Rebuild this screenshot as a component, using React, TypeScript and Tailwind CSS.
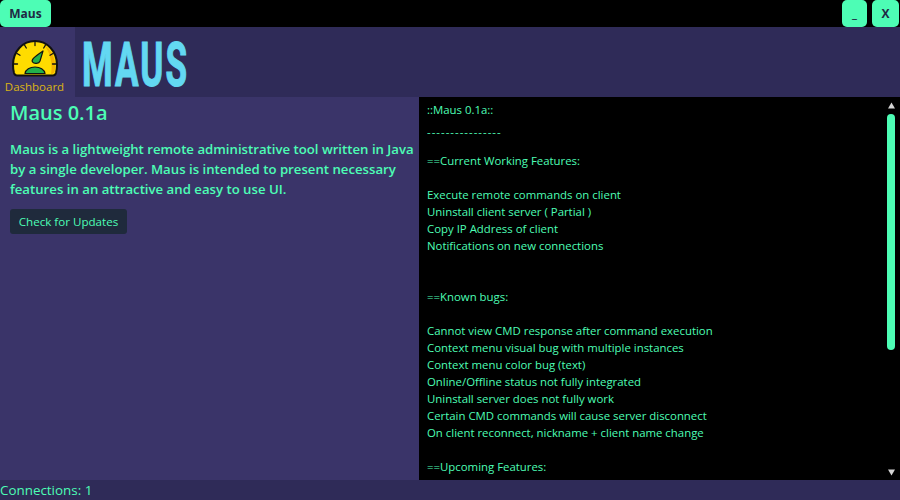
import React from 'react';

const uiFont = "font-['Open_Sans','Noto_Sans',sans-serif]";

const notes: string[] = [
  'Execute remote commands on client',
  'Uninstall client server ( Partial )',
  'Copy IP Address of client',
  'Notifications on new connections',
];

const bugs: string[] = [
  'Cannot view CMD response after command execution',
  'Context menu visual bug with multiple instances',
  'Context menu color bug (text)',
  'Online/Offline status not fully integrated',
  'Uninstall server does not fully work',
  'Certain CMD commands will cause server disconnect',
  'On client reconnect, nickname + client name change',
];

const Gauge = () => (
  <svg width="46" height="37" viewBox="0 0 46 37" className="ml-[1px] block">
    <path d="M5 35.500 C3 35.500 2.500 34.500 2 33 C1.300 30.500 1 27.500 1 25 C1 11 11 1 23 1 C35 1 45 11 45 25 C45 27.500 44.700 30.500 44 33 C43.500 34.500 43 35.500 41 35.500 Z" fill="#ffdc00" stroke="#111" strokeWidth="2" strokeLinejoin="round" />
    <path d="M39 34 C42 34 42.500 32 43 29 C44 18 39 9 32 5 C38 12 41 24 39 34 Z" fill="#f5b400" />
    <g stroke="#111" strokeWidth="1.300" strokeLinecap="round">
      <path d="M23 2v3.500" />
      <path d="M12.500 5l1.800 3" />
      <path d="M33.500 5l-1.800 3" />
      <path d="M5 13.500l3 1.700" />
      <path d="M41 13.500l-3 1.700" />
      <path d="M2 24h3.500" />
      <path d="M44 24h-3.500" />
    </g>
    <path d="M31 11 L28 21 C27 24 22 24 20.500 22 C19 20 21.500 17.500 31 11 Z" fill="#22b04c" stroke="#111" strokeWidth="1.200" strokeLinejoin="round" />
    <path d="M13 33.500 C13.500 29.500 18 27 23 27 C28 27 32.500 29.500 33 33.500 Z" fill="#22b04c" stroke="#111" strokeWidth="1.200" strokeLinejoin="round" />
  </svg>
);

const ArrowUp = () => (
  <svg width="7" height="7" viewBox="0 0 7 7"><path d="M3.500 0.500 L7 6.500 H0 Z" fill="#d4d4d4" /></svg>
);

const ArrowDown = () => (
  <svg width="7" height="7" viewBox="0 0 7 7"><path d="M0 0.500 H7 L3.500 6.500 Z" fill="#d4d4d4" /></svg>
);

export default function App() {
  return (
    <div className={`flex h-[500px] w-[900px] flex-col overflow-hidden bg-black ${uiFont}`}>
      {/* Title bar */}
      <div className="flex h-[27px] shrink-0 items-start justify-between bg-black">
        <button className="h-[27px] w-[51px] rounded-[5px] bg-[#4dfdb5] text-[12px] font-bold text-[#1f2a44]">
          Maus
        </button>
        <div className="mr-[1px] flex gap-[5px]">
          <button className="h-[27px] w-[25px] rounded-[5px] bg-[#4dfdb5] text-[12px] font-bold text-[#1f2a44]">_</button>
          <button className="h-[27px] w-[27px] rounded-[5px] bg-[#4dfdb5] text-[12px] font-bold text-[#1f2a44]">X</button>
        </div>
      </div>

      {/* Header */}
      <div className="flex h-[70px] shrink-0 bg-[#2f2b58]">
        <div className="flex w-[75px] shrink-0 flex-col items-center bg-[#3a3469] pt-[13px] pr-[6px]">
          <Gauge />
          <span className="mt-[2px] text-[11.5px] leading-[15px] font-medium whitespace-nowrap text-[#dcb414]">Dashboard</span>
        </div>
        <div className="flex items-center pt-[6px] pl-[7px]">
          <span className="inline-block origin-left scale-x-[0.7] scale-y-[1.24] font-['Roboto',sans-serif] text-[50px] leading-none font-bold tracking-[3px] text-[#63d8f2] [-webkit-text-stroke:1px_#63d8f2]">
            MAUS
          </span>
        </div>
      </div>

      {/* Main */}
      <div className="flex min-h-0 flex-1">
        <div className="w-[419px] shrink-0 bg-[#3a3469] pl-[10px] text-[#4dfdb5]">
          <h1 className="mt-[1px] text-[20px] leading-[30px] font-semibold">Maus 0.1a</h1>
          <p className="mt-[11px] text-[13.2px] leading-[20px] font-semibold">
            Maus is a lightweight remote administrative tool written in Java by a single developer. Maus is intended to present necessary features in an attractive and easy to use UI.
          </p>
          <button className="mt-[10px] flex h-[25px] w-[117px] items-center justify-center rounded-[3px] bg-[#1f2a3c] text-[11.6px] font-medium text-[#4dfdb5]">
            Check for Updates
          </button>
        </div>

        <div className="relative min-w-0 flex-1 overflow-hidden bg-black pt-[4px] pl-[8px] text-[11.4px] leading-[17px] text-[#4dfdb5]">
          <p>::Maus 0.1a::</p>
          <p className="mt-[5px] tracking-[1px]">----------------</p>
          <p className="mt-[12px]">==Current Working Features:</p>
          <div className="mt-[17px]">
            {notes.map((n) => (
              <p key={n}>{n}</p>
            ))}
          </div>
          <p className="mt-[34px]">==Known bugs:</p>
          <div className="mt-[17px]">
            {bugs.map((b) => (
              <p key={b}>{b}</p>
            ))}
          </div>
          <p className="mt-[17px]">==Upcoming Features:</p>

          {/* Scrollbar */}
          <div className="absolute top-0 right-0 bottom-0 flex w-[18px] flex-col items-center bg-black pt-[5px] pb-[4px]">
            <ArrowUp />
            <div className="mt-[5px] h-[236px] w-[8px] rounded-full bg-[#4dfdb5]" />
            <div className="flex-1" />
            <ArrowDown />
          </div>
        </div>
      </div>

      {/* Status bar */}
      <div className="flex h-[20px] shrink-0 items-center bg-[#2f2b58] text-[13.4px] leading-[20px] font-medium text-[#4dfdb5]">
        Connections: 1
      </div>
    </div>
  );
}
